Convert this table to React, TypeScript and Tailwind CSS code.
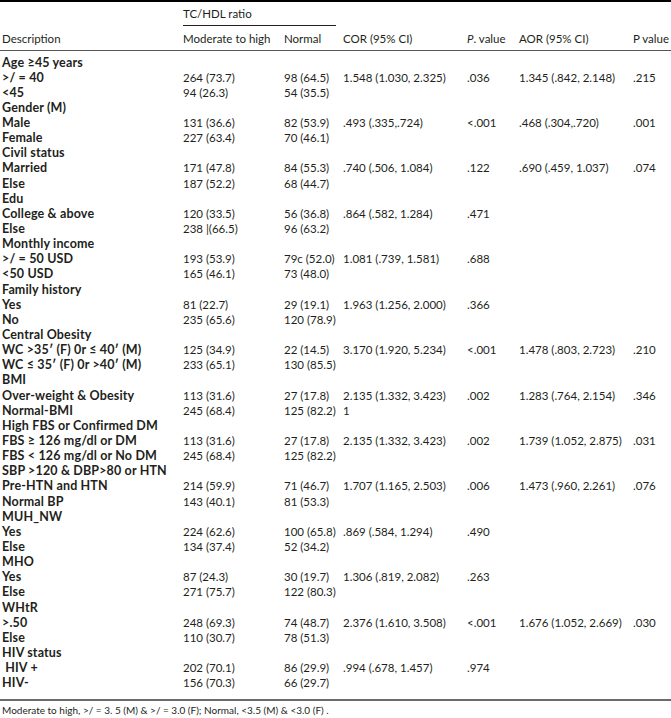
import React from "react";

type Row = {
  d: string;
  h?: boolean;
  a?: string;
  b?: string;
  c?: string;
  p?: string;
  o?: string;
  q?: string;
};

const rows: Row[] = [
  { d: "Age \u226545 years", h: true },
  { d: ">/ = 40", a: "264 (73.7)", b: "98 (64.5)", c: "1.548 (1.030, 2.325)", p: ".036", o: "1.345 (.842, 2.148)", q: ".215" },
  { d: "<45", a: "94 (26.3)", b: "54 (35.5)" },
  { d: "Gender (M)", h: true },
  { d: "Male", a: "131 (36.6)", b: "82 (53.9)", c: ".493 (.335,.724)", p: "<.001", o: ".468 (.304,.720)", q: ".001" },
  { d: "Female", a: "227 (63.4)", b: "70 (46.1)" },
  { d: "Civil status", h: true },
  { d: "Married", a: "171 (47.8)", b: "84 (55.3)", c: ".740 (.506, 1.084)", p: ".122", o: ".690 (.459, 1.037)", q: ".074" },
  { d: "Else", a: "187 (52.2)", b: "68 (44.7)" },
  { d: "Edu", h: true },
  { d: "College & above", a: "120 (33.5)", b: "56 (36.8)", c: ".864 (.582, 1.284)", p: ".471" },
  { d: "Else", a: "238 |(66.5)", b: "96 (63.2)" },
  { d: "Monthly income", h: true },
  { d: ">/ = 50 USD", a: "193 (53.9)", b: "79c (52.0)", c: "1.081 (.739, 1.581)", p: ".688" },
  { d: "<50 USD", a: "165 (46.1)", b: "73 (48.0)" },
  { d: "Family history", h: true },
  { d: "Yes", a: "81 (22.7)", b: "29 (19.1)", c: "1.963 (1.256, 2.000)", p: ".366" },
  { d: "No", a: "235 (65.6)", b: "120 (78.9)" },
  { d: "Central Obesity", h: true },
  { d: "WC >35\u2032 (F) 0r \u2264 40\u2032 (M)", a: "125 (34.9)", b: "22 (14.5)", c: "3.170 (1.920, 5.234)", p: "<.001", o: "1.478 (.803, 2.723)", q: ".210" },
  { d: "WC \u2264 35\u2032 (F) 0r >40\u2032 (M)", a: "233 (65.1)", b: "130 (85.5)" },
  { d: "BMI", h: true },
  { d: "Over-weight & Obesity", a: "113 (31.6)", b: "27 (17.8)", c: "2.135 (1.332, 3.423)", p: ".002", o: "1.283 (.764, 2.154)", q: ".346" },
  { d: "Normal-BMI", a: "245 (68.4)", b: "125 (82.2)", c: "1" },
  { d: "High FBS or Confirmed DM", h: true },
  { d: "FBS \u2265 126 mg/dl or DM", a: "113 (31.6)", b: "27 (17.8)", c: "2.135 (1.332, 3.423)", p: ".002", o: "1.739 (1.052, 2.875)", q: ".031" },
  { d: "FBS < 126 mg/dl or No DM", a: "245 (68.4)", b: "125 (82.2)" },
  { d: "SBP >120 & DBP>80 or HTN", h: true },
  { d: "Pre-HTN and HTN", a: "214 (59.9)", b: "71 (46.7)", c: "1.707 (1.165, 2.503)", p: ".006", o: "1.473 (.960, 2.261)", q: ".076" },
  { d: "Normal BP", a: "143 (40.1)", b: "81 (53.3)" },
  { d: "MUH_NW", h: true },
  { d: "Yes", a: "224 (62.6)", b: "100 (65.8)", c: ".869 (.584, 1.294)", p: ".490" },
  { d: "Else", a: "134 (37.4)", b: "52 (34.2)" },
  { d: "MHO", h: true },
  { d: "Yes", a: "87 (24.3)", b: "30 (19.7)", c: "1.306 (.819, 2.082)", p: ".263" },
  { d: "Else", a: "271 (75.7)", b: "122 (80.3)" },
  { d: "WHtR", h: true },
  { d: ">.50", a: "248 (69.3)", b: "74 (48.7)", c: "2.376 (1.610, 3.508)", p: "<.001", o: "1.676 (1.052, 2.669)", q: ".030" },
  { d: "Else", a: "110 (30.7)", b: "78 (51.3)" },
  { d: "HIV status", h: true },
  { d: "\u00a0HIV +", a: "202 (70.1)", b: "86 (29.9)", c: ".994 (.678, 1.457)", p: ".974" },
  { d: "HIV-", a: "156 (70.3)", b: "66 (29.7)" },
];

const grid = "grid grid-cols-[183px_101px_59px_124px_52px_114px_1fr]";

export default function App() {
  return (
    <div className="w-[671px] h-[718px] bg-white text-[#231f20] font-['Lato',sans-serif] text-[11.5px] overflow-hidden">
      <div className="border-t-2 border-black">
        <div className={`${grid} h-[24px] pt-[4px]`}>
          <div />
          <div className="col-span-2 mr-[7px] border-b border-[#231f20] leading-[15px]">TC/HDL ratio</div>
        </div>
        <div className={`${grid} h-[25px] items-end pb-[4px] border-b border-[#555] leading-[15px]`}>
          <div className="pl-[2px]">Description</div>
          <div>Moderate to high</div>
          <div>Normal</div>
          <div>COR (95% CI)</div>
          <div><span className="italic">P</span>. value</div>
          <div>AOR (95% CI)</div>
          <div>P value</div>
        </div>
        <div className="pt-[3.5px] pb-[9px] border-b-2 border-[#6b6b6b]">
          {rows.map((r, i) => (
            <div key={i} className={`${grid} h-[15.15px] leading-[15.15px] whitespace-nowrap`}>
              <div className="pl-[2px] font-bold text-[12.5px] tracking-[0.15px]">{r.d}</div>
              <div>{r.a ?? ""}</div>
              <div>{r.b ?? ""}</div>
              <div>{r.c ?? ""}</div>
              <div>{r.p ?? ""}</div>
              <div>{r.o ?? ""}</div>
              <div>{r.q ?? ""}</div>
            </div>
          ))}
        </div>
        <div className="pl-[2px] pt-[3px] text-[10px] leading-[12px]">
          Moderate to high, &gt;/ = 3. 5 (M) &amp; &gt;/ = 3.0 (F); Normal, &lt;3.5 (M) &amp; &lt;3.0 (F) .
        </div>
      </div>
    </div>
  );
}
